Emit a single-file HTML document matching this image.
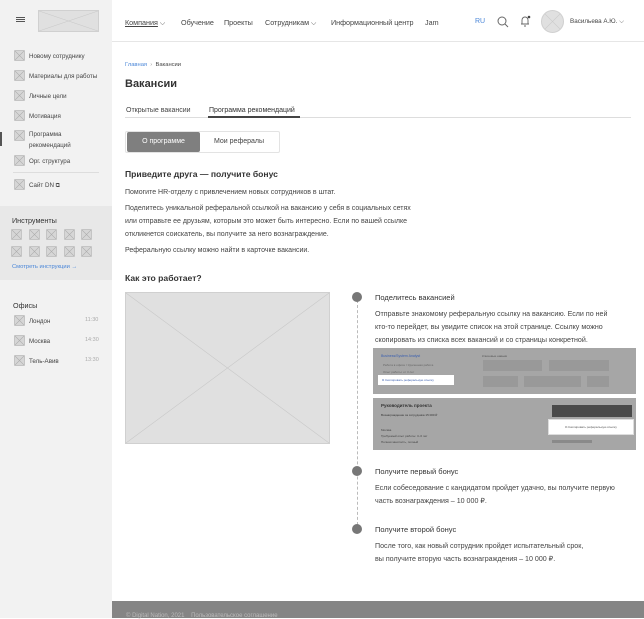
<!DOCTYPE html>
<html><head><meta charset="utf-8"><style>
*{margin:0;padding:0;box-sizing:border-box}
body{width:644px;height:618px;overflow:hidden;font-family:"Liberation Sans","Noto Sans CJK SC",sans-serif;color:#333;background:#fff;position:relative}
.a{position:absolute;white-space:nowrap}
.side{position:absolute;left:0;top:0;width:112px;height:618px;background:#f2f2f2}
.ph{position:absolute;background:#e0e0e0;border:1px solid #d0d0d0;overflow:hidden}
.ph svg{position:absolute;left:0;top:0;width:100%;height:100%}
.s{font-size:6.3px;color:#444}
.t{font-size:7px;color:#444;line-height:13px}
.tt{font-size:7.1px;color:#444;line-height:13px}
</style></head><body>
<div class="side"></div>
<div class="a" style="left:0;top:206px;width:112px;height:74px;background:#e8e8e8"></div>
<div class="a" style="left:16px;top:17px;width:9px;height:1px;background:#555;box-shadow:0 2px 0 #555,0 4px 0 #555"></div>
<div class="ph" style="left:38px;top:10px;width:61px;height:22px"><svg viewBox="0 0 61 22" preserveAspectRatio="none"><path d="M0 0L61 22M61 0L0 22" stroke="#c8c8c8" stroke-width=".6"/></svg></div>

<div id="menu"></div>
<div class="a" style="left:0;top:132px;width:2px;height:14px;background:#555"></div>
<div class="a" style="left:13px;top:172px;width:86px;height:1px;background:#ddd"></div>
<div class="a" style="left:12px;top:216px;font-size:7.2px;color:#333">Инструменты</div>
<div class="a" style="left:12px;top:264px;font-size:5.8px;color:#4a86d8">Смотреть инструкции →</div>
<div class="a" style="left:13px;top:301px;font-size:7.2px;color:#333">Офисы</div>

<div class="a" style="left:112px;top:41px;width:532px;height:1px;background:#e6e6e6"></div>
<div class="a s" style="left:125px;top:18px;font-size:7.2px"><span style="text-decoration:underline">Компания</span> ⌵</div>
<div class="a s" style="left:181px;top:18px;font-size:7.2px">Обучение</div>
<div class="a s" style="left:224px;top:18px;font-size:7.2px">Проекты</div>
<div class="a s" style="left:265px;top:18px;font-size:7.2px">Сотрудникам ⌵</div>
<div class="a s" style="left:331px;top:18px;font-size:7.2px">Информационный центр</div>
<div class="a s" style="left:425px;top:18px;font-size:7.2px">Jam</div>
<div class="a" style="left:475px;top:18px;font-size:7px;color:#4a86d8">RU</div>
<svg class="a" style="left:497px;top:16px" width="12" height="12"><circle cx="5" cy="5" r="4" fill="none" stroke="#666" stroke-width="1"/><path d="M8 8L11 11" stroke="#666"/></svg>
<svg class="a" style="left:519px;top:15px" width="12" height="12"><path d="M2 9h8M3 9V5a3 3 0 0 1 6 0v4M5 11h2" fill="none" stroke="#666" stroke-width=".9"/><circle cx="10" cy="2" r="1.3" fill="#444"/></svg>
<div class="ph" style="left:541px;top:10px;width:23px;height:23px;border-radius:50%"><svg viewBox="0 0 23 23"><path d="M3 3L20 20M20 3L3 20" stroke="#c8c8c8" stroke-width=".6"/></svg></div>
<div class="a s" style="left:570px;top:18px;font-size:6.3px">Васильева А.Ю. ⌵</div>

<div class="a" style="left:125px;top:62px;font-size:5.8px;color:#4a86d8">Главная <span style="color:#999">&nbsp;›&nbsp;</span> <span style="color:#444">Вакансии</span></div>
<div class="a" style="left:125px;top:78px;font-size:11px;font-weight:bold;color:#333">Вакансии</div>
<div class="a s" style="left:126px;top:107px;font-size:7px">Открытые вакансии</div>
<div class="a s" style="left:209px;top:107px;font-size:7px;color:#333">Программа рекомендаций</div>
<div class="a" style="left:125px;top:117px;width:506px;height:1px;background:#ddd"></div>
<div class="a" style="left:208px;top:116px;width:92px;height:2px;background:#444"></div>
<div class="a" style="left:125px;top:131px;width:155px;height:22px;border:1px solid #e3e3e3;border-radius:2px"></div>
<div class="a" style="left:127px;top:132px;width:73px;height:20px;background:#7f7f7f;border-radius:2px;color:#fff;font-size:7px;text-align:center;line-height:20px">О программе</div>
<div class="a s" style="left:214px;top:138px;font-size:7px">Мои рефералы</div>

<div class="a" style="left:125px;top:169px;font-size:8.6px;font-weight:bold;color:#333">Приведите друга — получите бонус</div>
<div class="a t" style="left:125px;top:186px">Помогите HR-отделу с привлечением новых сотрудников в штат.</div>
<div class="a t" style="left:125px;top:202px">Поделитесь уникальной реферальной ссылкой на вакансию у себя в социальных сетях<br>или отправьте ее друзьям, которым это может быть интересно. Если по вашей ссылке<br>откликнется соискатель, вы получите за него вознаграждение.</div>
<div class="a t" style="left:125px;top:244px">Реферальную ссылку можно найти в карточке вакансии.</div>
<div class="a" style="left:125px;top:273px;font-size:8.6px;font-weight:bold;color:#333">Как это работает?</div>

<div class="ph" style="left:125px;top:292px;width:205px;height:152px"><svg viewBox="0 0 205 152" preserveAspectRatio="none"><path d="M0 0L205 152M205 0L0 152" stroke="#c8c8c8" stroke-width=".6"/></svg></div>

<div class="a" style="left:357px;top:300px;width:0;height:230px;border-left:1px dashed #bbb"></div>
<div class="a" style="left:352px;top:292px;width:10px;height:10px;border-radius:50%;background:#777"></div>
<div class="a" style="left:352px;top:466px;width:10px;height:10px;border-radius:50%;background:#777"></div>
<div class="a" style="left:352px;top:524px;width:10px;height:10px;border-radius:50%;background:#777"></div>
<div class="a" style="left:375px;top:293px;font-size:7.5px;color:#333">Поделитесь вакансией</div>
<div class="a tt" style="left:375px;top:308px">Отправьте знакомому реферальную ссылку на вакансию. Если по ней<br>кто-то перейдет, вы увидите список на этой странице. Ссылку можно<br>скопировать из списка всех вакансий и со страницы конкретной.</div>

<div class="a" style="left:373px;top:348px;width:263px;height:46px;background:#a6a6a6"></div>
<div class="a" style="left:381px;top:354px;font-size:3.5px;color:#3a5fb0">Business/System Analyst</div>
<div class="a" style="left:383px;top:363px;font-size:3px;color:#666">Работа в офисе / Удаленная работа</div>
<div class="a" style="left:383px;top:370px;font-size:3px;color:#666">Опыт работы: от 3 лет</div>
<div class="a" style="left:378px;top:375px;width:76px;height:10px;background:#fff;font-size:3px;color:#3a5fb0;line-height:10px;padding-left:4px">⧉ Скопировать реферальную ссылку</div>
<div class="a" style="left:482px;top:354px;font-size:3px;color:#555">Ключевые навыки</div>
<div class="a" style="left:483px;top:360px;width:59px;height:11px;background:#999"></div>
<div class="a" style="left:549px;top:360px;width:60px;height:11px;background:#999"></div>
<div class="a" style="left:483px;top:376px;width:35px;height:11px;background:#999"></div>
<div class="a" style="left:524px;top:376px;width:57px;height:11px;background:#999"></div>
<div class="a" style="left:587px;top:376px;width:22px;height:11px;background:#999"></div>

<div class="a" style="left:373px;top:398px;width:263px;height:52px;background:#a6a6a6"></div>
<div class="a" style="left:381px;top:403px;font-size:4.5px;font-weight:bold;color:#333">Руководитель проекта</div>
<div class="a" style="left:381px;top:413px;font-size:3px;color:#333">Вознаграждение за сотрудника 15 000 ₽</div>
<div class="a" style="left:381px;top:428px;font-size:3px;color:#444">Москва</div>
<div class="a" style="left:381px;top:434px;font-size:3px;color:#444">Требуемый опыт работы: 3–6 лет</div>
<div class="a" style="left:381px;top:440px;font-size:3px;color:#444">Полная занятость, полный</div>
<div class="a" style="left:552px;top:405px;width:80px;height:12px;background:#4a4a4a"></div>
<div class="a" style="left:548px;top:419px;width:86px;height:16px;background:#fff;border:1px solid #ddd;font-size:3px;line-height:14px;text-align:center;color:#555">⧉ Скопировать реферальную ссылку</div>
<div class="a" style="left:552px;top:440px;width:40px;height:3px;background:#8a8a8a"></div>

<div class="a" style="left:375px;top:467px;font-size:7.5px;color:#333">Получите первый бонус</div>
<div class="a tt" style="left:375px;top:482px">Если собеседование с кандидатом пройдет удачно, вы получите первую<br>часть вознаграждения – 10 000 ₽.</div>
<div class="a" style="left:375px;top:525px;font-size:7.5px;color:#333">Получите второй бонус</div>
<div class="a tt" style="left:375px;top:540px">После того, как новый сотрудник пройдет испытательный срок,<br>вы получите вторую часть вознаграждения – 10 000 ₽.</div>

<div class="a" style="left:112px;top:601px;width:532px;height:17px;background:#858585"></div>
<div class="a" style="left:126px;top:613px;font-size:6px;color:#bbb">© Digital Nation, 2021 &nbsp;&nbsp; Пользовательское соглашение</div>

<script>
var m=[["Новому сотруднику",51],["Материалы для работы",71],["Личные цели",91],["Мотивация",111],["",131],["Орг. структура",156],["Сайт DN ⧉",180]];
var h="";
function box(x,y,s){return '<div class="ph" style="left:'+x+'px;top:'+y+'px;width:'+s+'px;height:'+s+'px;border-radius:1px;background:#d6d6d6;border-color:#c4c4c4"><svg viewBox="0 0 10 10"><path d="M0 0L10 10M10 0L0 10" stroke="#aaa" stroke-width=".6"/></svg></div>';}
m.forEach(function(e){h+=box(14,e[1]-1,11);if(e[0])h+='<div class="a s" style="left:29px;top:'+(e[1]+1.5)+'px;font-size:6.2px">'+e[0]+'</div>';});
h+='<div class="a s" style="left:29px;top:129px;font-size:6.2px;line-height:11px">Программа<br>рекомендаций</div>';
for(var r=0;r<2;r++)for(var c=0;c<5;c++)h+=box(11+c*17.5,229+r*17,11);
[["Лондон","11:30",315],["Москва","14:30",335],["Тель-Авив","13:30",355]].forEach(function(e){h+=box(14,e[2],11);h+='<div class="a s" style="left:29px;top:'+(e[2]+3)+'px;font-size:6.2px">'+e[0]+'</div><div class="a" style="left:85px;top:'+(e[2]+2)+'px;font-size:5.5px;color:#aaa">'+e[1]+'</div>';});
document.getElementById("menu").outerHTML=h;
</script>
</body></html>
